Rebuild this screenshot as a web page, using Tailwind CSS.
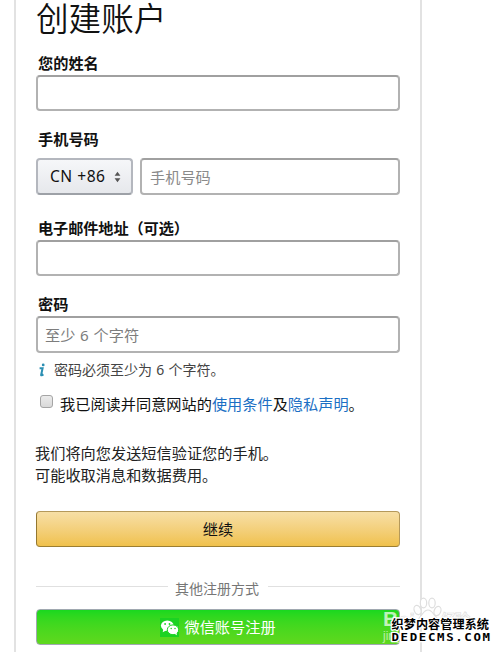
<!DOCTYPE html>
<html lang="zh-CN">

<head>
  <meta charset="UTF-8">
  <meta name="viewport" content="width=device-width, initial-scale=1.0">
  <script src="https://cdn.jsdelivr.net/npm/@tailwindcss/browser@4"></script>
  <title>创建账户</title>
</head>

<body class="relative w-[500px] h-[652px] overflow-hidden bg-white font-['Noto_Sans','Noto_Sans_CJK_SC',sans-serif] text-[15.2px] text-[#111]">
  <main class="ml-[14px] w-[408px] h-[652px] border-x-2 border-[#e2e2e2] pl-5 pr-5">
    <h1 class="h-[51px] text-[32.6px] leading-[34px] font-['Noto_Sans_CJK_SC',sans-serif] font-[350]">创建账户</h1>

    <form>
      <label for="name" class="block pl-0.5 h-6 leading-6 font-bold">您的姓名</label>
      <input id="name" class="block w-full h-9 border-2 border-[#b2b2b2] border-t-[#a0a0a0] rounded-[4px]">

      <label for="phone" class="block pl-0.5 mt-4 mb-[7px] h-6 leading-6 font-bold">手机号码</label>
      <div class="flex gap-[7px]">
        <button type="button"
          class="flex items-center w-[97px] h-[37px] pl-3 border-2 border-[#b4b7be] border-b-[#9da1a7] rounded-[4px] bg-linear-to-b from-[#f6f7f9] to-[#e6e8ec]">
          <span class="w-[57px] text-left whitespace-nowrap text-[15.6px] tracking-[0.5px]">CN +86</span>
          <svg class="ml-[7px] w-[7px] h-[12px]" viewBox="0 0 7 12" fill="#555">
            <path d="M3.5 0.8 6.4 4.7H0.6zM3.5 11.2 6.4 7.3H0.6z" />
          </svg>
        </button>
        <input id="phone" placeholder="手机号码"
          class="w-[260px] h-[37px] pl-2 border-2 border-[#b2b2b2] border-t-[#a0a0a0] rounded-[4px] placeholder:text-[#8a8a8a]">
      </div>

      <label for="email" class="block pl-0.5 mt-[21px] h-6 leading-6 font-bold tracking-[-0.1px]">电子邮件地址（可选）</label>
      <input id="email" class="block w-full h-9 border-2 border-[#b2b2b2] border-t-[#a0a0a0] rounded-[4px]">

      <label for="password" class="block pl-0.5 mt-4 h-6 leading-6 font-bold">密码</label>
      <input id="password" placeholder="至少 6 个字符"
        class="block w-full h-[37px] pl-[7px] border-2 border-[#b2b2b2] border-t-[#a0a0a0] rounded-[4px] placeholder:text-[#7d7d7d] placeholder:[word-spacing:0.8px]">

      <div class="flex items-center mt-[7px] h-5 pl-[3px] text-[14px] leading-5 text-[#444] [word-spacing:0.6px]">
        <svg class="mr-[9px] w-[6px] h-[14px]" viewBox="0 0 6 14" fill="none" stroke="#2b8fb3">
          <circle cx="4.2" cy="1.9" r="1.4" fill="#2b8fb3" stroke="none" />
          <path d="M.6 5.3h3L2.1 12q0 .9 2.3-.6" stroke-width="2" />
        </svg>
        密码必须至少为 6 个字符。
      </div>

      <div class="flex items-center mt-3 h-6 pl-1 leading-6">
        <span class="mr-[7px] mb-[5px] w-[13px] h-[13px] border border-[#a5a5a5] rounded-[3px] bg-linear-to-b from-[#ebebeb] to-[#d9d9d9]"></span>
        <p class="whitespace-nowrap">我已阅读并同意网站的<a class="text-[#1b6fc4]">使用条件</a>及<a class="text-[#1b6fc4]">隐私声明</a>。</p>
      </div>

      <p class="mt-[26px] leading-[22px] text-[#222] -ml-px">我们将向您发送短信验证您的手机。<br>可能收取消息和数据费用。</p>

      <button type="button"
        class="block mt-[25px] w-full h-9 border border-[#b5995a] border-b-[#9c7e31] border-l-[#94772f] rounded-[4px] bg-linear-to-b from-[#f7dfa5] to-[#f0c14b]">继续</button>

      <div class="flex items-center gap-2 mt-[31px] h-5 text-[14px] leading-5 text-[#767676]">
        <span class="flex-1 mb-1 h-px bg-[#e0e0e0]"></span>
        <span class="mt-px -ml-px mr-px">其他注册方式</span>
        <span class="flex-1 mb-1 h-px bg-[#e0e0e0]"></span>
      </div>

      <button type="button"
        class="flex justify-center items-center mt-[11px] w-full h-9 border border-[#a0a8b0] rounded-[4px] bg-linear-to-b from-[#18d81f] to-[#5fd81e] text-white">
        <span class="mr-[5px] w-[19px] h-[19px] bg-[#1bd322]">
          <svg class="w-[19px] h-[19px]" viewBox="0 0 19 19" fill="#fff">
            <ellipse cx="7.3" cy="7.6" rx="6.4" ry="5.2" />
            <path d="M3.4 11 2.7 14.3 6.5 12.3z" />
            <ellipse cx="13" cy="11.8" rx="5.7" ry="4.9" stroke="#1bd322" />
            <path d="M14.5 15.7 17 17.2 16.5 14.4z" />
            <g fill="#1bd322">
              <circle cx="5.1" cy="6" r=".9" />
              <circle cx="9.5" cy="6" r=".9" />
              <circle cx="11.2" cy="10.4" r=".75" />
              <circle cx="15" cy="10.4" r=".75" />
            </g>
          </svg>
        </span>
        微信账号注册
      </button>
    </form>
  </main>

  <!-- watermark -->
  <svg class="absolute left-[380px] top-[594px] w-[120px] h-[58px]" viewBox="0 0 120 58">
    <g fill="#fff" stroke="#dedede" stroke-width="1.2">
      <ellipse cx="37.5" cy="16" rx="3.3" ry="4.8" transform="rotate(-20 37.5 16)" />
      <ellipse cx="43.5" cy="9" rx="3.2" ry="4.8" />
      <ellipse cx="52" cy="9" rx="3.2" ry="4.8" />
      <ellipse cx="57.5" cy="17" rx="3.3" ry="4.8" transform="rotate(20 57.5 17)" />
      <path d="M48 16c4 0 5 4 8 7s2 7-2 7H42c-4 0-5-4-2-7s4-7 8-7z" />
    </g>
    <g font-family="Liberation Sans, Noto Sans CJK SC, sans-serif" font-weight="bold">
      <text x="3" y="32" font-size="21" fill="#fff" fill-opacity=".7">B</text>
      <g fill="#fff" stroke="#dedede" stroke-width=".7">
        <text x="19" y="32" font-size="19">ai</text>
        <text x="61" y="31" font-size="15" textLength="29">经验</text>
      </g>
      <text x="3" y="46" font-size="12" font-weight="normal" fill="#fff" fill-opacity=".6">jingyan</text>
    </g>
    <g fill="#000" stroke="#fff" stroke-width="2.6" stroke-linejoin="round" paint-order="stroke">
      <text x="11.5" y="35.3" font-family="Noto Sans CJK SC, sans-serif" font-weight="bold" font-size="12.2" textLength="97.5">织梦内容管理系统</text>
      <text transform="translate(11.5 47.3) scale(1.18 1)" font-family="DejaVu Sans Mono, monospace" font-weight="bold" font-size="10.5" textLength="83.5">DEDECMS.COM</text>
    </g>
  </svg>
</body>

</html>
